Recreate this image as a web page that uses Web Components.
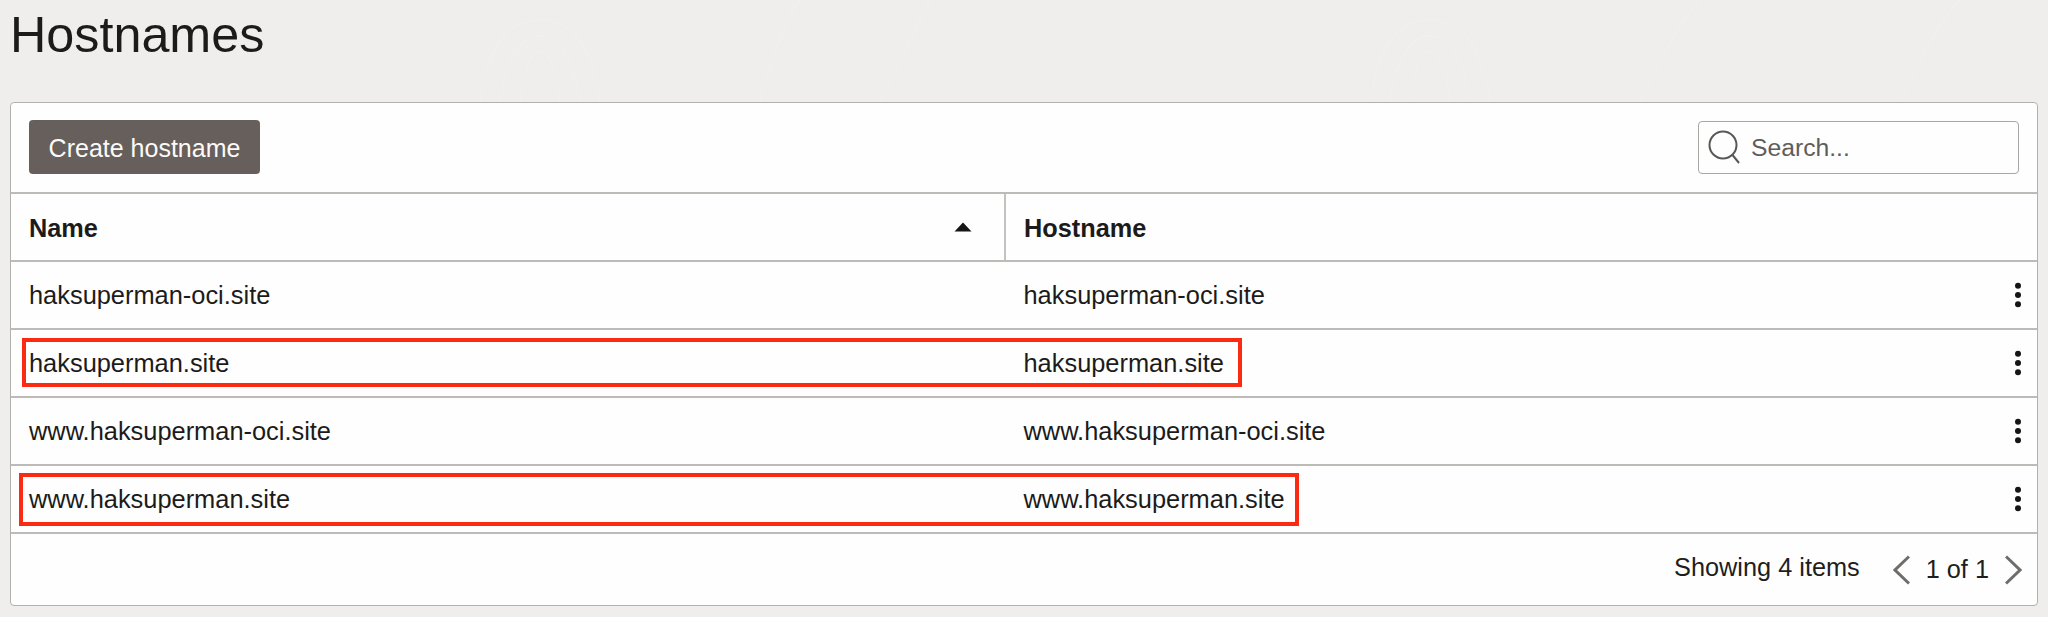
<!DOCTYPE html>
<html lang="en"><head><meta charset="utf-8"><title>Hostnames</title>
<style>
html,body{margin:0;padding:0}
body{width:2048px;height:617px;overflow:hidden;background:#efeeec;font-family:"Liberation Sans",Arial,sans-serif;color:#1c1b1a}
</style></head>
<body>
<hn-page>
  <hn-table>
    <hn-toolbar slot="toolbar"></hn-toolbar>
    <hn-row name="haksuperman-oci.site"></hn-row>
    <hn-row name="haksuperman.site"></hn-row>
    <hn-row name="www.haksuperman-oci.site"></hn-row>
    <hn-row name="www.haksuperman.site"></hn-row>
  </hn-table>
</hn-page>
<script>
function def(tag, html, init){
  customElements.define(tag, class extends HTMLElement{
    connectedCallback(){
      if(this.shadowRoot) return;
      const r=this.attachShadow({mode:'open'});
      r.innerHTML=html;
      if(init) init(this,r);
    }
  });
}
def('hn-page',`<style>
:host{display:block;position:relative;height:617px;overflow:hidden;box-sizing:border-box;padding:0 10px}
h1{margin:0;height:102px;box-sizing:border-box;padding-top:8px;font:400 50.3px/54px "Liberation Sans",Arial,sans-serif;color:#1c1b1a;position:relative}
svg{position:absolute;left:0;top:0;pointer-events:none}
</style>
<svg width="2048" height="617" fill="none" stroke="#f2f1ef" stroke-width="1.5" opacity=".8">
<path d="M480 102C490 40 510 20 540 20S590 40 600 102M500 102C508 55 520 36 540 36S572 55 580 102M520 102C524 70 530 52 540 52S556 70 560 102M1370 102C1380 40 1400 20 1430 20S1480 40 1490 102M1390 102C1398 55 1410 36 1430 36S1462 55 1470 102M1410 102C1414 70 1420 52 1430 52S1446 70 1450 102M760 102C770 60 790 10 800 0M880 102C900 60 920 20 930 0M1640 102C1660 60 1680 20 1700 0M1900 102C1920 60 1940 20 1960 0"/>
</svg>
<h1>Hostnames</h1><slot></slot>`);

def('hn-table',`<style>
:host{display:block;position:relative;width:2028px;height:504px;box-sizing:border-box;background:#fefefe;border:1px solid #b3b1ae;border-radius:4px}
.head{display:grid;grid-template-columns:995px 1fr;height:68px;box-sizing:border-box;border-bottom:2px solid #bdbbb8;font-weight:700;font-size:25.3px;color:#1c1b1a}
.head>div{display:flex;align-items:center;justify-content:space-between;box-sizing:border-box}
.head span{padding-top:2px}
.n{padding:0 32px 0 18px;border-right:2px solid #c4c2bf}
.h{padding-left:18px}
.foot{display:flex;align-items:center;justify-content:flex-end;height:72px;box-sizing:border-box;padding:0 15px 0 0;font-size:25.3px;color:#1f1e1d}
.sh{margin-right:33px;padding-bottom:6px}
.pg{display:flex;align-items:center;gap:16px}
.pg span{padding-bottom:2px}
.box{position:absolute;box-sizing:border-box;border:4px solid #fb2a12}
.b1{left:11px;top:235px;width:1220px;height:49px}
.b2{left:8px;top:370px;width:1280px;height:53px}
</style>
<slot name="toolbar"></slot>
<div class="head"><div class="n"><span>Name</span><svg width="18" height="10" viewBox="0 0 18 10"><path d="M9 0.5 17.5 9.5H.5Z" fill="#161514"/></svg></div><div class="h"><span>Hostname</span></div></div>
<slot></slot>
<div class="foot"><span class="sh">Showing 4 items</span><div class="pg">
<svg width="17" height="30" viewBox="0 0 17 30" fill="none" stroke="#6f6c69" stroke-width="3"><path d="M16 1.5 2 15 16 28.5"/></svg>
<span>1 of 1</span>
<svg width="17" height="30" viewBox="0 0 17 30" fill="none" stroke="#6f6c69" stroke-width="3"><path d="M1 1.5 15 15 1 28.5"/></svg>
</div></div>
<div class="box b1"></div><div class="box b2"></div>`);

def('hn-toolbar',`<style>
:host{display:flex;align-items:center;justify-content:space-between;height:91px;box-sizing:border-box;padding:0 18px 1px 18px;border-bottom:2px solid #bdbbb8}
button{width:231px;height:54px;border:0;border-radius:4px;background:#675f5b;color:#fbfaf9;font:400 25px "Liberation Sans",Arial,sans-serif;padding:2px 0 0}
.s{display:flex;align-items:center;width:321px;height:53px;box-sizing:border-box;border:1px solid #a9a7a4;border-radius:4px;padding-left:9px;gap:11px;font-size:24.7px;color:#5f5d5b}
.s span{padding-top:2px}
</style>
<button>Create hostname</button>
<div class="s"><svg width="32" height="34" viewBox="0 0 32 34" fill="none" stroke="#5a5856" stroke-width="2"><circle cx="15" cy="15" r="13.5"/><path d="M24.5 25 31 33"/></svg><span>Search...</span></div>`);

def('hn-row',`<style>
:host{display:grid;grid-template-columns:994.5px 1fr 38px;align-items:center;height:68px;box-sizing:border-box;border-bottom:2px solid #bdbbb8;font-size:25.4px;color:#1c1b1a}
span{padding:1px 0 0 18px}
.k{display:flex;justify-content:center}
</style>
<span id="a"></span><span id="b"></span>
<div class="k"><svg width="8" height="26" viewBox="0 0 8 26" fill="#161514"><circle cx="4" cy="3.7" r="3"/><circle cx="4" cy="13" r="3"/><circle cx="4" cy="22.3" r="3"/></svg></div>`,
(h,r)=>{const n=h.getAttribute('name');r.getElementById('a').textContent=n;r.getElementById('b').textContent=n;});
</script>
</body></html>
